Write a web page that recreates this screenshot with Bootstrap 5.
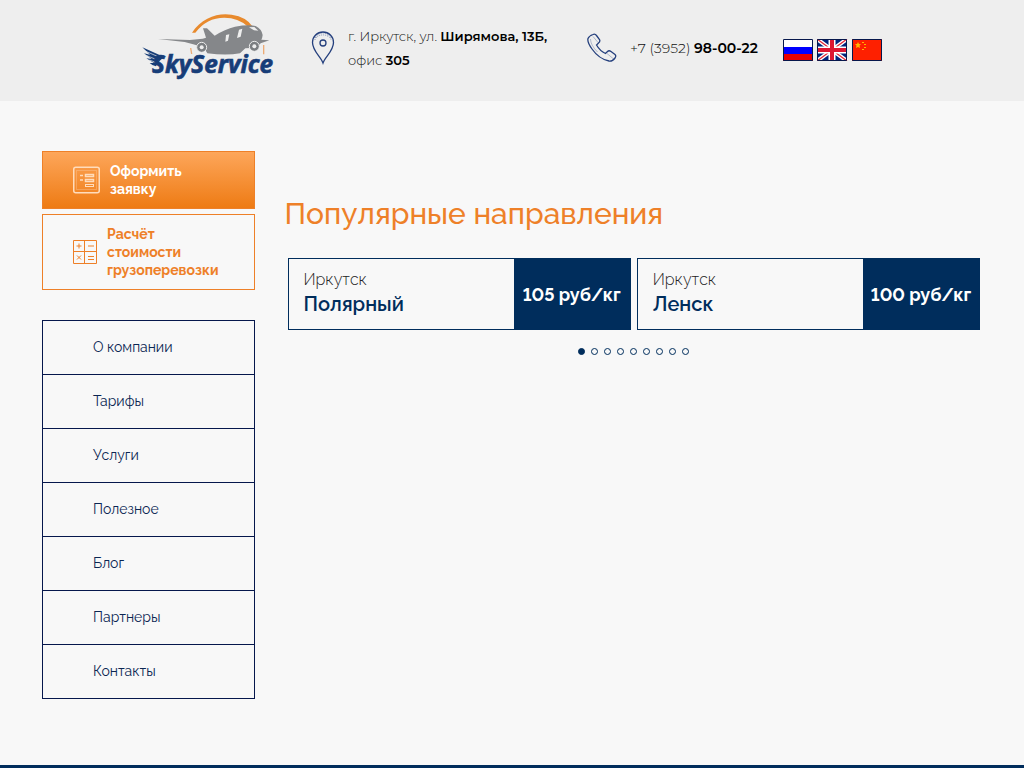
<!DOCTYPE html>
<html lang="ru">
<head>
<meta charset="utf-8">
<meta name="viewport" content="width=device-width, initial-scale=1">
<title>SkyService</title>
<link rel="stylesheet" href="https://cdn.jsdelivr.net/npm/bootstrap@5.3.0/dist/css/bootstrap.min.css">
<style>
  :root { --navy: #002d5c; --line: #06174c; --orange: #ee8028; }
  body { font-family: Raleway, Lato, "Open Sans", sans-serif; font-size: 14px; line-height: 18px; background: #f8f8f8; color: #111; }
  a { text-decoration: none; }
  .site-head { background: #eee; min-height: 101px; padding: 12px 16px 16px; }
  .site-head svg { display: block; flex: none; }
  .site-head a { color: #111; }
  .contact { font-family: Montserrat, Lato, sans-serif; line-height: 24px; font-weight: 300; }
  .contact b { font-weight: 600; color: #000; }
  .address { width: 276px; gap: 13px; padding-top: 12px; font-size: 13px; }
  .phone { width: 196px; gap: 13px; }
  .brand { width: 169px; }
  .flags { gap: 4px; padding-top: 27px; }
  .page-box { max-width: 970px; padding: 50px 15px 66px; }
  .page-box > .row { --bs-gutter-x: 30px; }
  .action { border: 1px solid var(--orange); padding: 10px 30px; gap: 10px; font-weight: 700; line-height: 18px; text-align: left; color: var(--orange); background: transparent; width: 100%; }
  .action-main { background: linear-gradient(#fda65a, #ee7b14); color: #fff; margin-bottom: 5px; }
  .side-menu { border: 1px solid var(--line); margin-top: 30px; }
  .side-menu a { display: block; padding: 17px 50px 18px; color: #0b2653; }
  .side-menu li + li { border-top: 1px solid var(--line); }
  .popular { padding-top: 45px; }
  .page-title { font-size: 30px; line-height: 36px; font-weight: 500; color: var(--orange); margin-bottom: 26px; }
  .routes { gap: 6px; padding: 0 2px 0 3px; margin-bottom: 18px; }
  .route { flex: 1 1 0; border: 1px solid var(--navy); color: #222; }
  .route-name { padding: 9px 15px 13px; font-size: 16px; line-height: 24px; font-weight: 300; }
  .route-name b { display: block; font-size: 20px; font-weight: 600; color: var(--navy); }
  .price { width: 116px; padding-top: 2px; background: var(--navy); color: #fff; font-size: 18px; font-weight: 700; font-variant-numeric: lining-nums; white-space: nowrap; }
  .dots { gap: 6px; }
  .dot { width: 7px; height: 7px; padding: 0; border: 1px solid var(--navy); border-radius: 50%; background: transparent; }
  .dot.active { background: var(--navy); }
  .site-foot { background: var(--navy); height: 3px; }
</style>
</head>
<body class="min-vh-100 d-flex flex-column">
<header class="site-head d-flex flex-wrap justify-content-center align-items-start">
  <a class="brand" href="#" aria-label="SkyService">
    <svg width="132" height="72" viewBox="36 21 396 216">
      <path d="M186 83C215 38 265 22 305 29Q350 36 367 64L352 64Q325 38 283 38Q230 38 196 83Z" fill="#e88a2d"/>
      <path d="M182 129l3 18M401 120v28" stroke="#edab75" stroke-width="4"/>
      <path d="M84 102L180 105L218 101L228 98L219 70L231 70L254 92Q285 72 315 65Q355 58 377 63Q395 72 398 90Q397 99 394 104L418 106L392 115L380 128L346 130L330 145Q290 152 232 145L222 128L195 119L164 111Z" fill="#85878a"/>
      <path d="M288 90l10-2-4 19-8 3zM327 74l10-3-5 24-11 4zM357 67l16-1 12 11-13-1z" fill="#eee"/>
      <g fill="#7b7e81" stroke="#eee" stroke-width="3"><circle cx="215" cy="127" r="15"/><circle cx="373" cy="124" r="15"/></g>
      <g fill="#eee"><circle cx="215" cy="127" r="6"/><circle cx="373" cy="124" r="6"/></g>
      <path d="M37 127L102 156L86 170L78 184Q67 182 59 174L72 174L49 160L65 162L42 145L60 149Z" fill="#173d78"/>
      <path d="M45 138l44 19M50 152l35 14M58 165l24 9" stroke="#eee" stroke-width="2"/>
      <text x="66" y="203" font-family="Open Sans, sans-serif" font-weight="700" font-style="italic" font-size="73" fill="#173d78" stroke="#173d78" stroke-width="2">SkyService</text>
    </svg>
  </a>
  <div class="contact address d-flex align-items-center">
    <svg width="24" height="34" viewBox="0 0 24 34" fill="none" stroke="#243f7d" stroke-width="1.3"><path d="M12 32C10 26 1.500 20 1.500 11.500A10.500 10.500 0 0 1 22.500 11.500C22.500 20 14 26 12 32Z"/><circle cx="12" cy="12" r="3"/><path d="M4 9a8 7 0 0 1 16 0M5 7a8 6 0 0 1 14 0" stroke-width="1" stroke-dasharray="1 1" opacity=".5"/></svg>
    <span>г. Иркутск, ул. <b>Ширямова, 13Б,</b><br>офис <b>305</b></span>
  </div>
  <a class="contact phone d-flex align-items-center" href="tel:+73952980022">
    <svg width="30" height="72" viewBox="0 -21 30 72" fill="none" stroke="#243f7d" stroke-width="1.3"><path d="M6 1.500Q8 .5 9.500 2.500L12.500 6.500Q13.500 8.500 11.500 10L9.500 12Q13 18 18.500 20.500L20.500 18.500Q22 17 24 18.500L28 21.500Q29.500 23 28 25Q25.500 28.500 22 28Q12 26 5 16Q0 9 1 5.500Q2 3 6 1.500Z"/><path d="M6 3.500l5 6M20 20.500l6 5M3.500 6q0 6 7 13" stroke-width=".8" opacity=".4"/></svg>
    <span>+7 (3952) <b>98-00-22</b></span>
  </a>
  <nav class="flags d-flex" aria-label="Язык">
    <a href="#" aria-label="Русский"><svg width="30" height="22"><path fill="#fff" d="M0 0h30v8H0z"/><path fill="#00f" d="M0 8h30v7H0z"/><path fill="#e80000" d="M0 15h30v7H0z"/><path d="M.5.5h29v21H.5z" fill="none" stroke="#06174c"/></svg></a>
    <a href="#" aria-label="English"><svg width="31" height="22"><path fill="#00247d" d="M0 0h30v22H0z"/><path d="M0 0l30 22M30 0L0 22" stroke="#fff" stroke-width="4"/><path d="M0 0l30 22M30 0L0 22" stroke="#e32636" stroke-width="1.300"/><path d="M15 0v22M0 11h30" stroke="#fff" stroke-width="7"/><path d="M15 0v22M0 11h30" stroke="#dd1631" stroke-width="4"/><path d="M.5.5h29v21H.5z" fill="none" stroke="#06174c"/></svg></a>
    <a href="#" aria-label="中文"><svg width="30" height="22"><path fill="#fe2000" d="M0 0h30v22H0z"/><path fill="#ffb400" d="M6 3l1 2h2L7.500 6.500l.5 2.500-2-1-2 1 .5-2.500L3 5h2zM10 3h2v1h-2zM12 5h2v1h-2zM12 8h2v1h-2zM10 10h2v1h-2z"/><path d="M.5.5h29v21H.5z" fill="none" stroke="#06174c"/></svg></a>
  </nav>
</header>

<main class="container page-box flex-grow-1">
  <div class="row">
    <aside class="col-12 col-md-3">
      <button type="button" class="action action-main d-flex align-items-center">
        <svg width="27" height="28" viewBox="0 0 27 28" fill="none" stroke="#ffdcbc"><rect x=".75" y="1.250" width="25.500" height="25.500" rx="2" stroke-width="1.500"/><rect x="3.500" y="4.500" width="20" height="19" opacity=".3"/><path d="M7 9.500h3M7 14h3" stroke-width="1.500"/><rect x="12.500" y="8.500" width="8" height="2" stroke-width="1.500"/><rect x="12.500" y="13.500" width="8" height="2" stroke-width="1.500"/><rect x="12.500" y="18.500" width="8" height="2"/></svg>
        <span>Оформить<br>заявку</span>
      </button>
      <button type="button" class="action d-flex align-items-center">
        <svg width="24" height="24" viewBox="0 0 24 24" fill="none" stroke="#ee8028"><path d="M.5.5h23v23H.5zM11.500 0v24M0 11.500h24" /><path d="M3.500 6h5M6 3.500v5M15 6h6M4 15.500l4 4M8 15.500l-4 4M15 16.500h6M15 19.500h6"/></svg>
        <span>Расчёт<br>стоимости<br>грузоперевозки</span>
      </button>
      <ul class="side-menu list-unstyled mb-0">
        <li><a href="#">О компании</a></li>
        <li><a href="#">Тарифы</a></li>
        <li><a href="#">Услуги</a></li>
        <li><a href="#">Полезное</a></li>
        <li><a href="#">Блог</a></li>
        <li><a href="#">Партнеры</a></li>
        <li><a href="#">Контакты</a></li>
      </ul>
    </aside>
    <section class="popular col-12 col-md-9">
      <h1 class="page-title">Популярные направления</h1>
      <div class="routes d-flex">
        <a class="route d-flex" href="#"><span class="route-name flex-grow-1">Иркутск<b>Полярный</b></span><span class="price d-flex align-items-center justify-content-center">105 руб/кг</span></a>
        <a class="route d-flex" href="#"><span class="route-name flex-grow-1">Иркутск<b>Ленск</b></span><span class="price d-flex align-items-center justify-content-center">100 руб/кг</span></a>
      </div>
      <div class="dots d-flex justify-content-center">
        <button class="dot active" aria-label="1"></button><button class="dot" aria-label="2"></button><button class="dot" aria-label="3"></button><button class="dot" aria-label="4"></button><button class="dot" aria-label="5"></button><button class="dot" aria-label="6"></button><button class="dot" aria-label="7"></button><button class="dot" aria-label="8"></button><button class="dot" aria-label="9"></button>
      </div>
    </section>
  </div>
</main>
<footer class="site-foot"></footer>
<script src="https://cdn.jsdelivr.net/npm/bootstrap@5.3.0/dist/js/bootstrap.bundle.min.js"></script>
</body>
</html>
